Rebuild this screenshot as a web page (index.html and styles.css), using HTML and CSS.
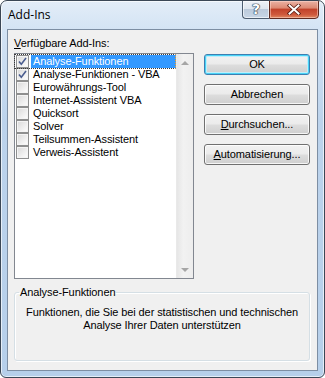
FILE: index.html
```html
<!DOCTYPE html>
<html lang="de">
<head>
<meta charset="utf-8">
<title>Add-Ins</title>
<link rel="stylesheet" href="styles.css">
</head>
<body>
<div class="window">
  <div class="titlebar">
    <span class="title">Add-Ins</span>
    <div class="caption">
      <div class="cap help">?</div>
      <div class="cap close">
        <svg width="14" height="11" viewBox="0 0 14 11"><path d="M2.5 1.5 L11.5 9.5 M11.5 1.5 L2.5 9.5" stroke="#5a1d12" stroke-width="3.6" stroke-linecap="square"/><path d="M2.5 1.5 L11.5 9.5 M11.5 1.5 L2.5 9.5" stroke="#ffffff" stroke-width="2" stroke-linecap="square"/></svg>
      </div>
    </div>
  </div>
  <div class="client">
    <div class="main">
      <div class="left">
        <div class="label"><u>V</u>erfügbare Add-Ins:</div>
        <div class="list">
          <ul class="items">
            <li class="item sel"><span class="cb"><svg width="11" height="11" viewBox="0 0 11 11"><path d="M2 5.5 L4.3 8.2 L9 2" fill="none" stroke="#4a5d8f" stroke-width="1.6"/></svg></span><span class="txt">Analyse-Funktionen</span></li>
            <li class="item"><span class="cb"><svg width="11" height="11" viewBox="0 0 11 11"><path d="M2 5.5 L4.3 8.2 L9 2" fill="none" stroke="#4a5d8f" stroke-width="1.6"/></svg></span><span class="txt">Analyse-Funktionen - VBA</span></li>
            <li class="item"><span class="cb"></span><span class="txt">Eurowährungs-Tool</span></li>
            <li class="item"><span class="cb"></span><span class="txt">Internet-Assistent VBA</span></li>
            <li class="item"><span class="cb"></span><span class="txt">Quicksort</span></li>
            <li class="item"><span class="cb"></span><span class="txt">Solver</span></li>
            <li class="item"><span class="cb"></span><span class="txt">Teilsummen-Assistent</span></li>
            <li class="item"><span class="cb"></span><span class="txt">Verweis-Assistent</span></li>
          </ul>
          <div class="scroll">
            <div class="sbtn"><span class="arrow up"></span></div>
            <div class="sbtn"><span class="arrow down"></span></div>
          </div>
        </div>
      </div>
      <div class="buttons">
        <div class="btn default">OK</div>
        <div class="btn">Abbrechen</div>
        <div class="btn"><u>D</u>urchsuchen...</div>
        <div class="btn"><u>A</u>utomatisierung...</div>
      </div>
    </div>
    <fieldset class="group">
      <legend>Analyse-Funktionen</legend>
      <p class="desc">Funktionen, die Sie bei der statistischen und technischen<br>Analyse Ihrer Daten unterstützen</p>
    </fieldset>
  </div>
</div>
</body>
</html>
```
FILE: styles.css
```css
* { box-sizing: border-box; }
html, body { margin: 0; padding: 0; background: #ffffff; }
body { font-family: "Liberation Sans", Arial, sans-serif; font-size: 11px; color: #000; letter-spacing: -0.1px; }

.window {
  width: 325px;
  height: 378px;
  border: 1px solid #3b4756;
  border-radius: 7px 7px 6px 6px;
  background: linear-gradient(to bottom, #e3edf8 0px, #d3e3f4 30px, #bcd3ec 120px, #b6cfea 100%);
  box-shadow: inset 0 0 0 1px rgba(255,255,255,0.65);
  display: flex;
  flex-direction: column;
  overflow: hidden;
}

.titlebar {
  height: 28px;
  display: flex;
  align-items: flex-start;
  flex: none;
}
.title {
  font-family: "Open Sans", "Noto Sans", sans-serif;
  font-size: 12px;
  letter-spacing: 0;
  line-height: 16px;
  margin: 6px 0 0 7px;
  color: #000;
}
.caption {
  margin-left: auto;
  margin-right: 5px;
  margin-top: -1px;
  display: flex;
}
.cap {
  height: 19px;
  border: 1px solid #4d5d70;
  display: flex;
  align-items: center;
  justify-content: center;
}
.help {
  width: 27px;
  border-right: none;
  border-radius: 0 0 0 4px;
  background: linear-gradient(to bottom, #eef2f7 0%, #dfe6ef 45%, #bccadb 50%, #c8d6e6 100%);
  box-shadow: inset 0 0 0 1px rgba(255,255,255,0.6);
  font-family: "DejaVu Sans", sans-serif;
  font-weight: bold;
  font-size: 14px;
  letter-spacing: 0;
  color: #fff;
  text-shadow: 0 0 1px #2d3b4c, 0 0 1px #2d3b4c, 0 0 1px #2d3b4c, 0 0 1px #2d3b4c;
  line-height: 17px;
}
.close {
  width: 50px;
  border-radius: 0 0 4px 0;
  border-color: #5f2a20;
  background: linear-gradient(to bottom, #eab2a4 0%, #dd8a74 40%, #c2432b 50%, #cf5a3d 80%, #e08a62 100%);
  box-shadow: inset 0 0 0 1px rgba(255,220,210,0.5);
}

.client {
  margin: 0 6px 6px 6px;
  height: 342px;
  border: 1px solid #7d8ea3;
  background: #f0f0f0;
  padding: 0 7px 0 6px;
  display: flex;
  flex-direction: column;
}

.main {
  display: flex;
  gap: 10px;
}
.left { width: 180px; }
.label {
  margin-top: 7px;
  line-height: 13px;
  height: 13px;
}
.list {
  margin-top: 3px;
  height: 226px;
  border: 1px solid #828790;
  background: #fff;
  display: flex;
}
.items {
  flex: 1;
  list-style: none;
  margin: 0;
  padding: 1px 0 0 0;
}
.item {
  height: 13px;
  display: flex;
  align-items: center;
  padding-left: 1px;
}
.cb {
  width: 13px;
  height: 13px;
  border: 1px solid #8e8f8f;
  background: linear-gradient(135deg, #d8d8d8 0%, #f0f0f0 60%, #ffffff 100%);
  box-shadow: inset 0 0 0 1px #f4f4f4;
  display: flex;
  align-items: center;
  justify-content: center;
  flex: none;
}
.txt {
  flex: 1;
  margin-left: 2px;
  padding-left: 2px;
  line-height: 13px;
  height: 13px;
  white-space: nowrap;
}
.sel { position: relative; }
.sel .txt {
  background: #3399ff;
  color: #fff;
}
.sel::after {
  content: "";
  position: absolute;
  left: -1px;
  top: -1px;
  right: 0;
  bottom: -1px;
  border: 1px dotted #3a3a3a;
  border-right-color: #f0a030;
  pointer-events: none;
}

.scroll {
  width: 17px;
  flex: none;
  background: linear-gradient(to right, #e6e6e6 0%, #f2f2f2 40%, #ededed 100%);
  border-left: 1px solid #e9e9e9;
  display: flex;
  flex-direction: column;
  justify-content: space-between;
}
.sbtn {
  height: 17px;
  display: flex;
  align-items: center;
  justify-content: center;
}
.arrow {
  width: 0;
  height: 0;
  border-left: 4px solid transparent;
  border-right: 4px solid transparent;
}
.arrow.up { border-bottom: 4px solid #a6a6a6; }
.arrow.down { border-top: 4px solid #a6a6a6; }

.buttons {
  width: 106px;
  margin-top: 24px;
  display: flex;
  flex-direction: column;
  gap: 9px;
}
.btn {
  height: 21px;
  border: 1px solid #707070;
  border-radius: 3px;
  background: linear-gradient(to bottom, #f2f2f2 0%, #ebebeb 48%, #dddddd 52%, #cfcfcf 100%);
  box-shadow: inset 0 0 0 1px rgba(255,255,255,0.8);
  text-align: center;
  line-height: 19px;
}
.btn.default {
  border-color: #3c7fb1;
  background: linear-gradient(to bottom, #f2f2f2 0%, #ebebeb 48%, #dddddd 52%, #cfcfcf 100%);
  box-shadow: inset 0 0 0 1px #48d2f6, inset 0 0 0 2px #bfeefb;
}

.group {
  margin: 7px 0 0 0;
  padding: 0;
  height: 75px;
  border: 1px solid #d5dfe5;
  border-radius: 3px;
  box-shadow: inset 1px 1px 0 #ffffff, 1px 1px 0 #ffffff;
  min-width: 0;
}
.group legend {
  margin-left: 4px;
  padding: 0 1px;
  line-height: 13px;
}
.desc {
  margin: 7px 0 0 0;
  text-align: center;
  line-height: 13px;
}
```
